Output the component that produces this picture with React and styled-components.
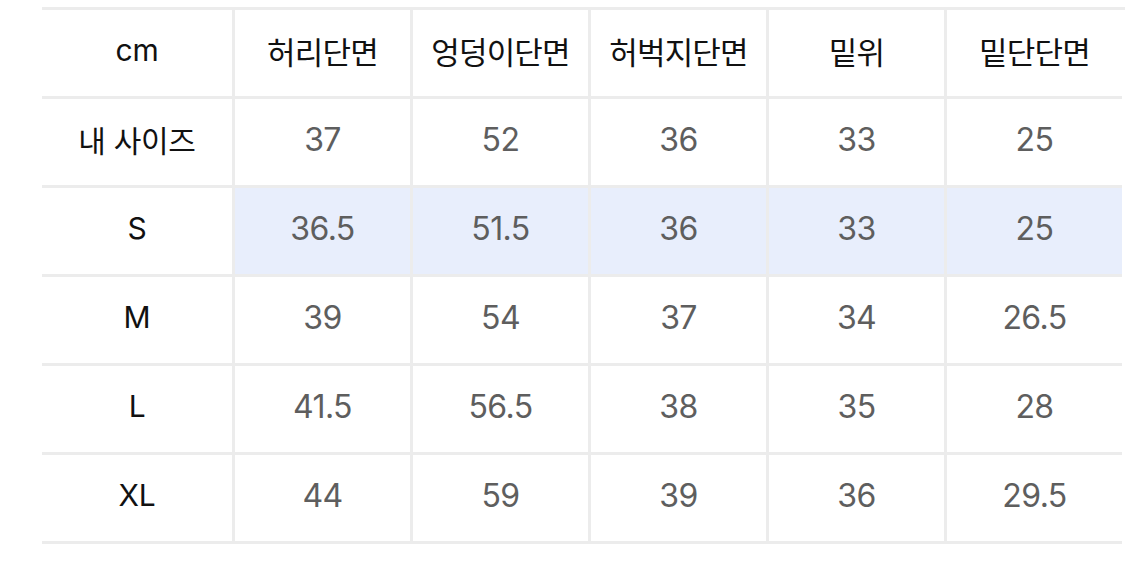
import React from "react";
import styled, { createGlobalStyle } from "styled-components";

const headers = ["허리단면", "엉덩이단면", "허벅지단면", "밑위", "밑단단면"];

const rows = [
  { label: "내 사이즈", values: ["37", "52", "36", "33", "25"] },
  { label: "S", values: ["36.5", "51.5", "36", "33", "25"], highlight: true },
  { label: "M", values: ["39", "54", "37", "34", "26.5"] },
  { label: "L", values: ["41.5", "56.5", "38", "35", "28"] },
  { label: "XL", values: ["44", "59", "39", "36", "29.5"] },
];

const App = () => {
  return (
    <>
      <GlobalStyle />
      <Page>
        <SizeTable>
          <LabelCell>cm</LabelCell>
          {headers.map((h) => (
            <HeadCell key={h}>{h}</HeadCell>
          ))}
          {rows.map((row) => (
            <React.Fragment key={row.label}>
              <LabelCell>{row.label}</LabelCell>
              {row.values.map((v, i) => (
                <ValueCell key={i} $highlight={row.highlight}>
                  {v}
                </ValueCell>
              ))}
            </React.Fragment>
          ))}
        </SizeTable>
      </Page>
    </>
  );
};

const GlobalStyle = createGlobalStyle`
  html, body {
    margin: 0;
    padding: 0;
    background: #ffffff;
  }
  body {
    font-family: "Inter", "Noto Sans CJK KR", sans-serif;
  }
`;

const Page = styled.div`
  width: 1125px;
  height: 572px;
  padding: 7px 0 0 42px;
  box-sizing: border-box;
  overflow: hidden;
`;

const SizeTable = styled.div`
  display: grid;
  grid-template-columns: 190px repeat(5, 178px);
  grid-auto-rows: 89px;
  border-top: 3px solid #ececec;
`;

const Cell = styled.div`
  display: flex;
  align-items: center;
  justify-content: center;
  box-sizing: border-box;
  padding-bottom: 6px;
  border-bottom: 3px solid #ececec;
`;

const LabelCell = styled(Cell)`
  color: #111111;
  font-family: "Inter", "Noto Sans CJK KR", sans-serif;
  font-size: 30px;
  font-weight: 400;
  letter-spacing: -0.3px;
`;

const HeadCell = styled(Cell)`
  border-left: 3px solid #ececec;
  color: #111111;
  font-family: "Noto Sans CJK KR", sans-serif;
  font-size: 31px;
  font-weight: 400;
  letter-spacing: -0.8px;
`;

const ValueCell = styled(Cell)`
  border-left: 3px solid #ececec;
  background: ${({ $highlight }) => ($highlight ? "#e8eefc" : "#ffffff")};
  color: #5e5e5e;
  font-family: "Inter", sans-serif;
  font-size: 32px;
  font-weight: 400;
  letter-spacing: -0.6px;
`;

export default App;
